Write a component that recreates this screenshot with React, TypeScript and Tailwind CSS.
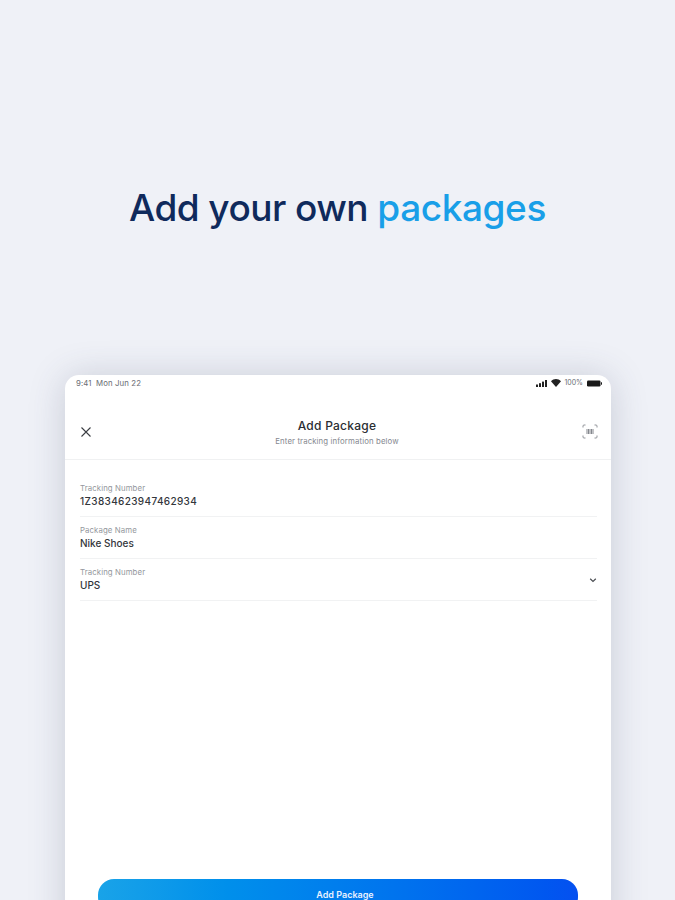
import React from "react";

function Field({ label, value, chevron, wide }: { label: string; value: string; chevron?: boolean; wide?: boolean }) {
  return (
    <div className="h-[42px] border-b border-[#f1f2f3] flex items-center justify-between">
      <div className="flex flex-col mt-[-1px]">
        <span className="text-[7.8px] leading-[11px] text-[#94979d] tracking-[0.1px]">{label}</span>
        <span className={wide ? "text-[10px] leading-[14px] font-medium text-[#33363b] tracking-[0.35px]" : "text-[10px] leading-[14px] font-medium text-[#33363b]"}>{value}</span>
      </div>
      {chevron && (
        <svg width="10" height="10" viewBox="0 0 10 10" fill="none" stroke="#4a4d52" strokeWidth="1.2" className="ml-auto mr-[-1px]">
          <path d="M2.2 3.8 L5 6.4 L7.8 3.8" />
        </svg>
      )}
    </div>
  );
}

export default function App() {
  return (
    <div className="w-[675px] h-[900px] overflow-hidden bg-[#eff1f7] flex flex-col font-['Inter',sans-serif]">
      <h1 className="mt-[183px] h-[50px] text-center text-[37px] leading-[50px] font-[550] tracking-[-0.55px] text-[#0f2a5c]">
        Add your own <span className="font-[450] tracking-[-0.4px] text-[#199fe8]">packages</span>
      </h1>
      <div className="mt-[142px] ml-[65px] w-[546px] h-[560px] shrink-0 bg-white rounded-t-[14px] shadow-[0_2px_36px_rgba(60,70,100,0.22)] flex flex-col">
        <div className="h-[14px] mt-[1px] pl-[11px] pr-[9px] flex items-center justify-between">
          <span className="text-[7.8px] leading-[12px] text-[#6a6d73] tracking-[0.1px]">9:41&nbsp; Mon Jun 22</span>
          <div className="flex items-center gap-[3px]">
            <svg width="12" height="7" viewBox="0 0 12 7" fill="#222">
              <rect x="0" y="4.5" width="2" height="2.5" />
              <rect x="3" y="3.2" width="2" height="3.8" />
              <rect x="6" y="1.6" width="2" height="5.4" />
              <rect x="9" y="0" width="2" height="7" />
            </svg>
            <svg width="10" height="8" viewBox="0 0 10 8" fill="#222">
              <path d="M0 2.2 C2.8 -0.6 7.2 -0.6 10 2.2 L5 8 Z" />
            </svg>
            <span className="text-[7px] leading-[12px] text-[#6a6d73]">100%</span>
            <svg width="15" height="7" viewBox="0 0 15 7" fill="#1a1a1a" className="ml-[1px]">
              <rect x="0" y="0.5" width="13.5" height="6" rx="1.2" />
              <rect x="14" y="2.3" width="1" height="2.4" />
            </svg>
          </div>
        </div>
        <div className="h-[70px] pt-[14px] border-b border-[#f0f1f2] flex items-center justify-between pl-[15px] pr-[13px]">
          <svg width="12" height="12" viewBox="0 0 12 12" fill="none" stroke="#3a3d42" strokeWidth="1.1">
            <path d="M1.5 1.5 L10.5 10.5 M10.5 1.5 L1.5 10.5" />
          </svg>
          <div className="flex flex-col items-center mt-[1px]">
            <span className="text-[12px] leading-[16px] font-medium text-[#2a2d32] tracking-[0.25px]">Add Package</span>
            <span className="text-[7.8px] leading-[11px] text-[#85888f] mt-[2px] tracking-[0.12px]">Enter tracking information below</span>
          </div>
          <svg width="16" height="15" viewBox="0 0 16 15" fill="none" stroke="#8f9298" strokeWidth="1">
            <path d="M1 3.5 V2 Q1 1 2 1 H3.5 M12.5 1 H14 Q15 1 15 2 V3.5 M1 11.5 V13 Q1 14 2 14 H3.5 M12.5 14 H14 Q15 14 15 13 V11.5" />
            <path d="M5 5 V10 M6.5 5 V10 M8 5 V10 M9.5 5 V10 M11 5 V10" stroke="#85888e" strokeWidth="1" />
          </svg>
        </div>
        <div className="pl-[15px] pr-[14px] pt-[15px] flex flex-col">
          <Field label="Tracking Number" value="1Z3834623947462934" wide />
          <Field label="Package Name" value="Nike Shoes" />
          <Field label="Tracking Number" value="UPS" chevron />
        </div>
        <div className="mt-[278px] mx-[33px] h-[34px] rounded-[16px] bg-gradient-to-r from-[#19a3e8] to-[#0550f0] flex items-center justify-center">
          <span className="text-[9px] leading-[12px] font-semibold text-[#e8f1ff] mt-[-2px] ml-[14px]">Add Package</span>
        </div>
      </div>
    </div>
  );
}
